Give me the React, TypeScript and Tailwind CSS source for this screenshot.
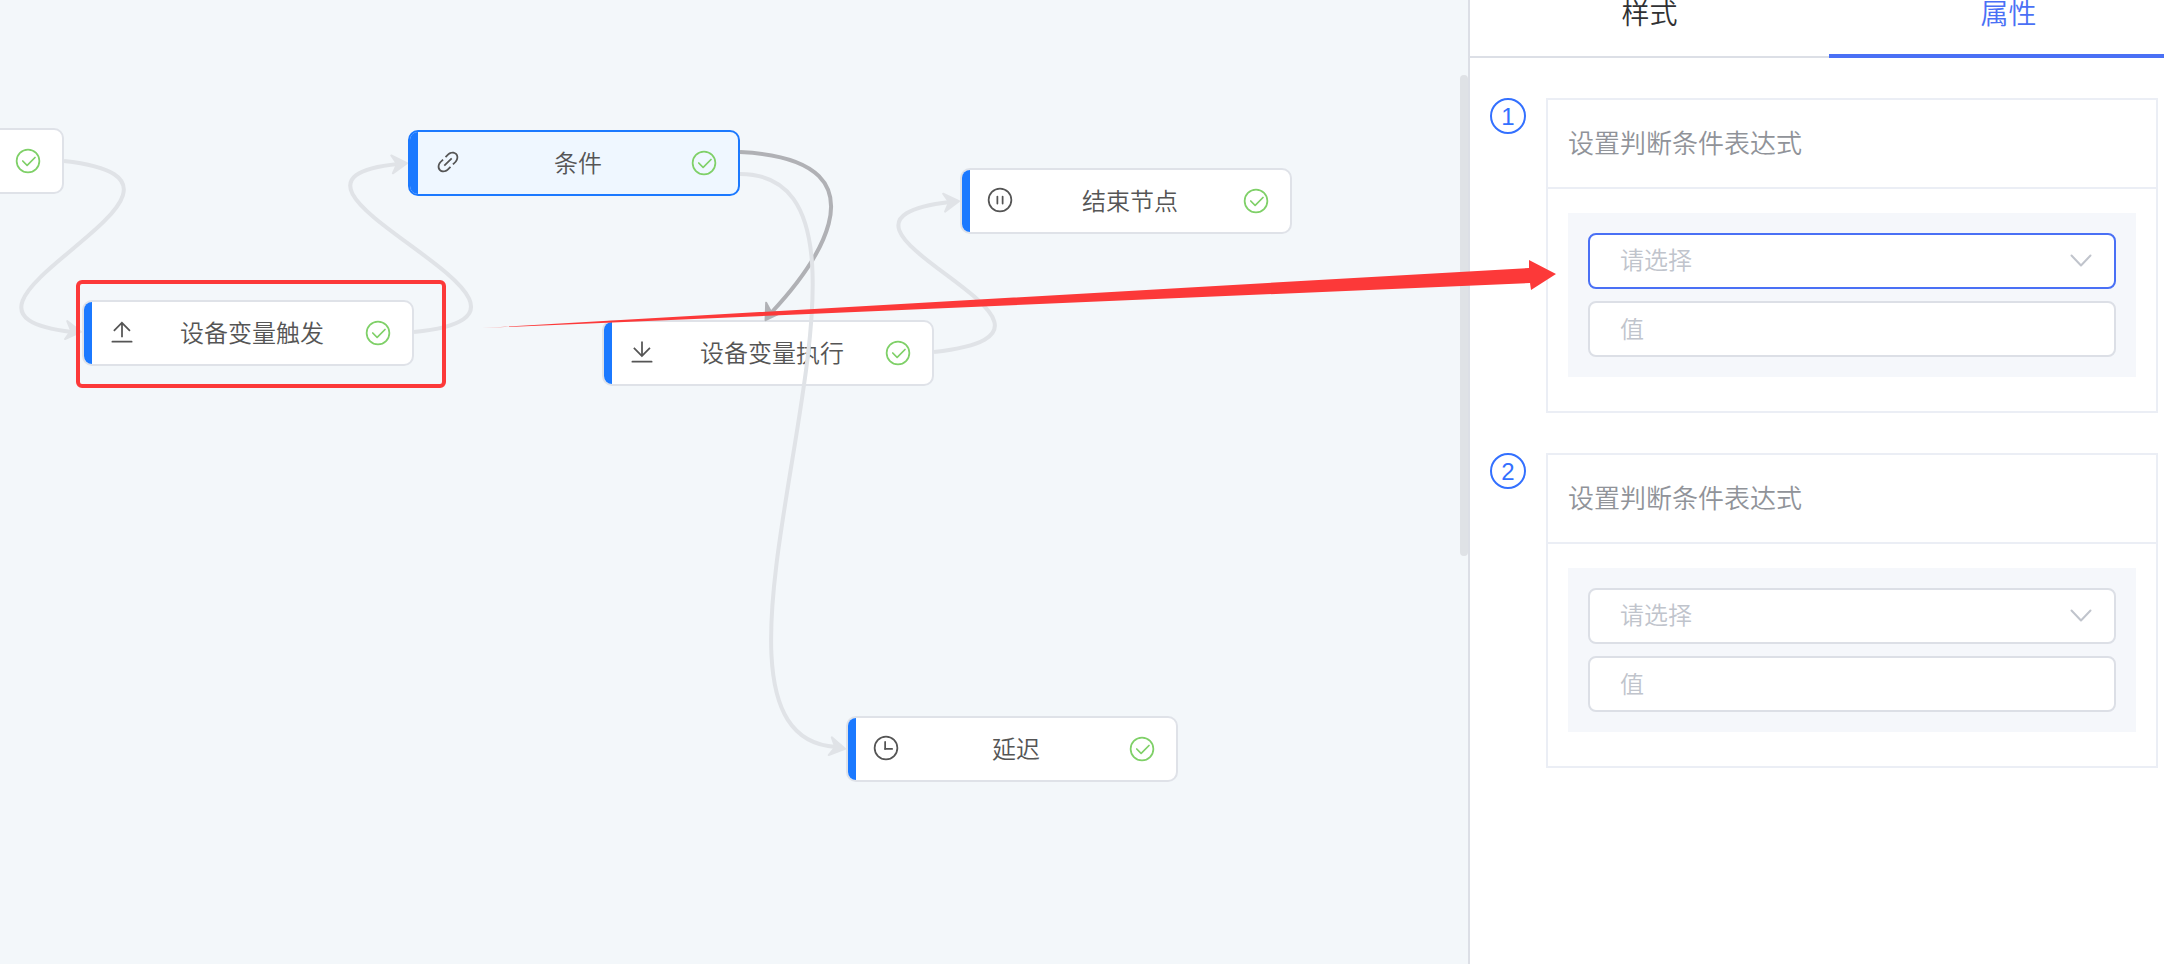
import { useState } from "react";

const CIRCLE =
  "M512 896a384 384 0 1 0 0-768 384 384 0 0 0 0 768m0 64a448 448 0 1 1 0-896 448 448 0 0 1 0 896";

const ICONS = {
  check: [
    CIRCLE,
    "M745.344 361.344a32 32 0 0 1 45.312 45.312l-288 288a32 32 0 0 1-45.312 0l-160-160a32 32 0 1 1 45.312-45.312L480 626.752z",
  ],
  upload: [
    "M160 832h704a32 32 0 1 1 0 64H160a32 32 0 1 1 0-64m384-578.304V704h-64V247.296L237.248 490.048 192 444.8 508.8 128l316.8 316.8-45.312 45.248z",
  ],
  download: [
    "M160 832h704a32 32 0 1 1 0 64H160a32 32 0 1 1 0-64m384-253.696 236.288-236.352 45.248 45.248L508.8 704 192 387.2l45.248-45.248L480 584.704V128h64z",
  ],
  clock: [
    CIRCLE,
    "M480 256a32 32 0 0 1 32 32v256a32 32 0 0 1-64 0V288a32 32 0 0 1 32-32",
    "M480 512h256q32 0 32 32t-32 32H480q-32 0-32-32t32-32",
  ],
  pause: [
    CIRCLE,
    "M416 352q32 0 32 32v256q0 32-32 32t-32-32V384q0-32 32-32m192 0q32 0 32 32v256q0 32-32 32t-32-32V384q0-32 32-32",
  ],
  link: [
    "M715.648 625.152 670.4 579.904l90.496-90.56c75.008-74.944 85.12-186.368 22.656-248.896-62.528-62.464-173.952-52.352-248.96 22.656L444.16 353.6l-45.248-45.248 90.496-90.496c100.032-99.968 251.968-110.08 339.456-22.656 87.488 87.488 77.312 239.424-22.656 339.456l-90.496 90.496zm-90.496 90.496-90.496 90.496C434.624 906.112 282.688 916.224 195.2 828.8c-87.488-87.488-77.312-239.424 22.656-339.456l90.496-90.496 45.248 45.248-90.496 90.56c-75.008 74.944-85.12 186.368-22.656 248.896 62.528 62.464 173.952 52.352 248.96-22.656l90.496-90.496zm0-362.048 45.248 45.248L398.848 670.4 353.6 625.152z",
  ],
};

type IconName = keyof typeof ICONS;

function Icon({ name, className }: { name: IconName; className: string }) {
  return (
    <svg viewBox="0 0 1024 1024" fill="currentColor" aria-hidden="true" className={`size-7 shrink-0 ${className}`}>
      {ICONS[name].map((d) => (
        <path key={d} d={d} />
      ))}
    </svg>
  );
}

type FlowNode = { id: string; label: string; icon: IconName; x: number; y: number; selected?: boolean };

const NODES: FlowNode[] = [
  { id: "start", label: "", icon: "clock", x: -268, y: 128 },
  { id: "trigger", label: "设备变量触发", icon: "upload", x: 82, y: 300 },
  { id: "condition", label: "条件", icon: "link", x: 408, y: 130, selected: true },
  { id: "execute", label: "设备变量执行", icon: "download", x: 602, y: 320 },
  { id: "end", label: "结束节点", icon: "pause", x: 960, y: 168 },
  { id: "delay", label: "延迟", icon: "clock", x: 846, y: 716 },
];

type Edge = { d: string; tip: [number, number]; angle: number; active?: boolean };

const EDGES: Edge[] = [
  { d: "M64 161C261 183 -107 312 72 332", tip: [82, 332], angle: 7 },
  { d: "M414 332C611 312 220 182 398 164", tip: [408, 163], angle: -5 },
  { d: "M740 152C906 160 800 282 771 313", tip: [765, 321], angle: 123, active: true },
  { d: "M740 174C936 174 653 736 836 747", tip: [846, 749], angle: 10 },
  { d: "M934 352C1131 330 771 223 950 202", tip: [960, 201], angle: -6 },
];

function NodeCard({ node }: { node: FlowNode }) {
  return (
    <div
      className={`absolute flex h-[66px] w-[332px] items-stretch overflow-hidden rounded-[10px] border-2 ${
        node.selected ? "border-[#1b79ff] bg-[#eff7ff]" : "border-[#dfe2e8] bg-white"
      }`}
      style={{ left: node.x, top: node.y }}
    >
      <span className="w-2 shrink-0 bg-[#1b79ff]" />
      <div className="flex min-w-0 flex-1 items-center pr-5 pl-4 text-[#555555]">
        <Icon name={node.icon} className="mb-0.5" />
        <span className="mb-0.5 ml-1 flex-1 text-center text-2xl whitespace-nowrap">{node.label}</span>
        <Icon name="check" className="text-[#7fd068]" />
      </div>
    </div>
  );
}

function Canvas() {
  return (
    <main className="relative min-w-0 flex-1 overflow-hidden bg-[#f3f7fa]">
      {NODES.map((node) => (
        <NodeCard key={node.id} node={node} />
      ))}
      <svg className="pointer-events-none absolute inset-0 size-full" fill="none" aria-hidden="true">
        {EDGES.map((edge) => {
          const color = edge.active ? "#b0b1b5" : "#e0e3e7";
          return (
            <g key={edge.d} stroke={color}>
              <path d={edge.d} strokeWidth="4" />
              <path
                d="M-1 0L-16 -9L-11 0L-16 9Z"
                fill={color}
                strokeWidth="2"
                strokeLinejoin="round"
                transform={`translate(${edge.tip[0]} ${edge.tip[1]}) rotate(${edge.angle})`}
              />
            </g>
          );
        })}
      </svg>
      <div className="absolute top-[75px] right-0 h-[481px] w-2 rounded-full bg-[#dfe2e6]" />
    </main>
  );
}

function ConditionCard({ index, focused }: { index: number; focused: boolean }) {
  const [value, setValue] = useState("");
  const field = "block h-14 w-full rounded-lg border-2 bg-white px-[30px] pb-1 text-2xl outline-none";
  return (
    <li className="flex items-start gap-5">
      <span className="flex size-9 shrink-0 items-center justify-center rounded-full border-2 border-[#3370ff] pt-0.5 font-['Liberation_Sans',sans-serif] text-2xl leading-none font-normal text-[#3370ff]">
        {index}
      </span>
      <section className="min-w-0 flex-1 border-2 border-[#ebeef5]">
        <h2 className="border-b-2 border-[#ebeef5] px-5 pt-[22px] pb-[26px] text-[26px] leading-[39px] font-[350] text-[#909399]">
          设置判断条件表达式
        </h2>
        <div className="px-5 pt-6 pb-[34px]">
          <div className="flex flex-col gap-3 bg-[#f5f7fb] p-5">
            <div className="relative">
              <select
                aria-label={`条件 ${index}`}
                className={`${field} appearance-none text-[#c0c4cc] ${focused ? "border-[#4a70f5]" : "border-[#dcdfe6]"}`}
              >
                <option>请选择</option>
              </select>
              <svg
                viewBox="0 0 24 24"
                className="pointer-events-none absolute top-4 right-6 size-6"
                fill="none"
                stroke="#c0c4cc"
                strokeWidth="2"
                strokeLinecap="round"
                strokeLinejoin="round"
                aria-hidden="true"
              >
                <path d="M3.5 6.5L13 16.5L22.5 6.5" />
              </svg>
            </div>
            <input
              aria-label={`值 ${index}`}
              placeholder="值"
              value={value}
              onChange={(event) => setValue(event.target.value)}
              className={`${field} border-[#dcdfe6] text-[#606266] placeholder:text-[#c0c4cc]`}
            />
          </div>
        </div>
      </section>
    </li>
  );
}

function PropertyPanel() {
  return (
    <aside className="w-[696px] shrink-0 overflow-hidden border-l-2 border-[#dcdfe6] bg-white">
      <nav className="flex h-[58px] w-[718px] items-stretch text-[28px] leading-6">
        <button type="button" className="flex-1 border-b-2 border-[#dcdfe6] pb-8 text-[#303133]">
          样式
        </button>
        <button type="button" className="flex-1 border-b-4 border-[#4a70f5] pb-[30px] text-[#4a70f5]">
          属性
        </button>
      </nav>
      <ol className="flex flex-col gap-10 py-10 pr-1.5 pl-5">
        <ConditionCard index={1} focused />
        <ConditionCard index={2} focused={false} />
      </ol>
    </aside>
  );
}

function Annotations() {
  return (
    <>
      <div className="pointer-events-none absolute top-[280px] left-[76px] h-[108px] w-[370px] rounded-md border-4 border-[#fc3939]" />
      <svg className="pointer-events-none absolute inset-0 size-full" fill="#fc3939" aria-hidden="true">
        <path d="M482 328L1529 268V260L1556 274L1531 290L1530 283Z" />
      </svg>
    </>
  );
}

export default function App() {
  return (
    <div className="relative flex min-h-screen overflow-hidden font-['Noto_Sans_CJK_SC',sans-serif] font-[350]">
      <Canvas />
      <PropertyPanel />
      <Annotations />
    </div>
  );
}
